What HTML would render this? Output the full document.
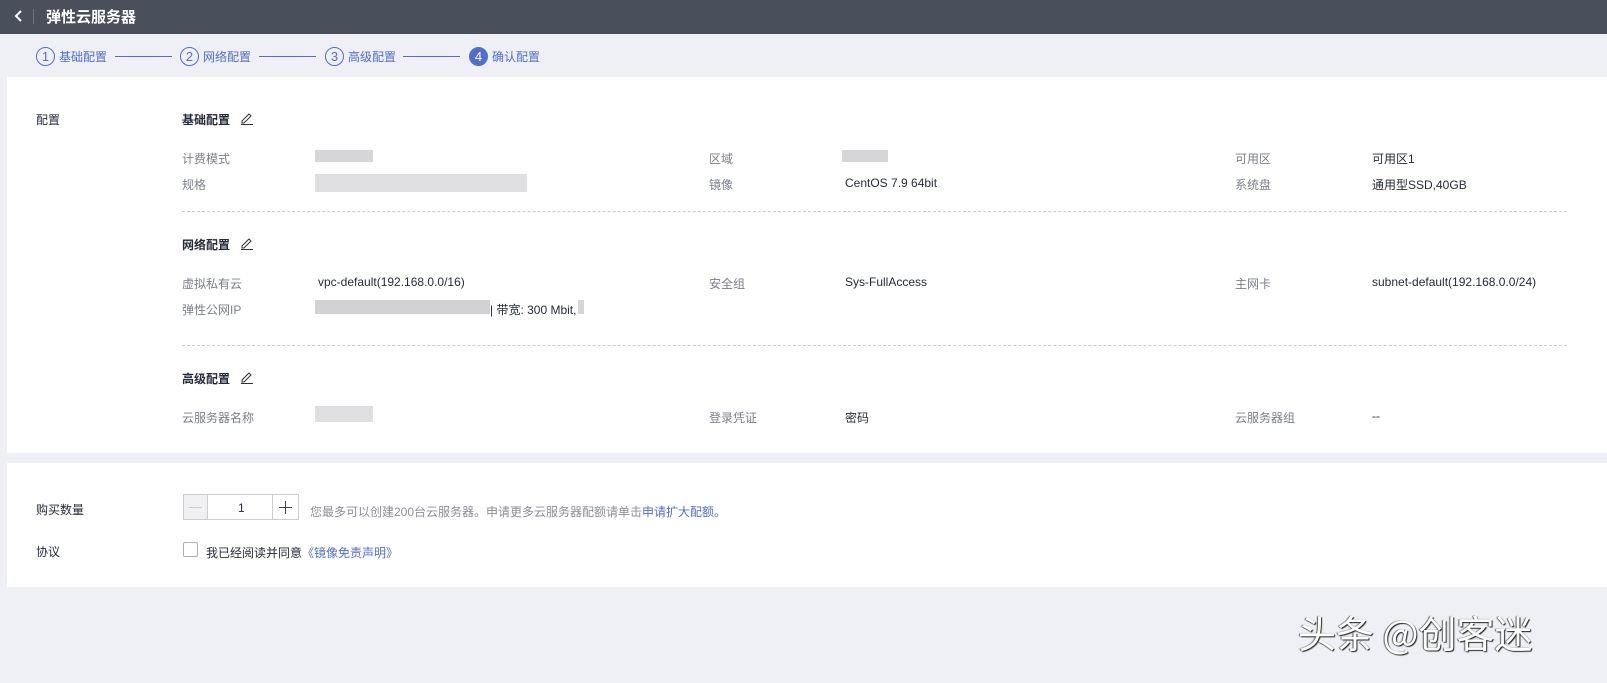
<!DOCTYPE html>
<html><head><meta charset="utf-8"><style>
*{margin:0;padding:0;box-sizing:border-box}
body{width:1607px;height:683px;background:#eef0f5;font-family:"Liberation Sans","Noto Sans CJK SC",sans-serif;font-size:12px;color:#252b3a;position:relative;overflow:hidden}
.a{position:absolute;white-space:nowrap}
.hd{position:absolute;left:0;top:0;width:1607px;height:34px;background:#4a4f5c}
.card{position:absolute;left:7px;right:0;background:#fff}
.lbl{color:#7b7f88}
.step{position:absolute;top:46px;height:20px;display:flex;align-items:center;color:#526ecc;font-size:12px}
.c{width:19px;height:19px;border:1px solid #526ecc;border-radius:50%;display:flex;align-items:center;justify-content:center;font-size:13px;margin-right:4px}
.line{position:absolute;top:56px;height:1px;background:#526ecc}
.blur{position:absolute;background:#d6d6d8}
.dash{position:absolute;left:182px;width:1385px;border-top:1px dashed #c9ccd2}
.pen{position:absolute;width:14px;height:14px}
</style></head><body>
<div class="hd"></div>
<svg class="a" style="left:14px;top:9px" width="10" height="14" viewBox="0 0 10 14"><path d="M7 2 L2 7 L7 12" fill="none" stroke="#fff" stroke-width="2"/></svg>
<div class="a" style="left:33px;top:9px;width:1px;height:15px;background:#6a6f7a"></div>
<div class="a" style="left:46px;top:6px;color:#fff;font-size:15px;font-weight:bold">弹性云服务器</div>

<div class="step" style="left:36px"><div class="c">1</div>基础配置</div>
<div class="line" style="left:115px;width:57px"></div>
<div class="step" style="left:180px"><div class="c">2</div>网络配置</div>
<div class="line" style="left:259px;width:57px"></div>
<div class="step" style="left:325px"><div class="c">3</div>高级配置</div>
<div class="line" style="left:403px;width:57px"></div>
<div class="step" style="left:469px"><div class="c" style="background:#526ecc;color:#fff">4</div>确认配置</div>

<div class="card" style="top:77px;height:376px"></div>
<div class="a" style="left:36px;top:111px">配置</div>

<div class="a" style="left:182px;top:111px;font-weight:bold">基础配置</div>
<svg class="pen" style="left:240px;top:111px" viewBox="0 0 14 14"><path d="M2 10 L9 3 L11 5 L4 12 L2 12 Z" fill="none" stroke="#333" stroke-width="1"/><path d="M1 13.5 H13" stroke="#333"/></svg>
<div class="a lbl" style="left:182px;top:150px">计费模式</div>
<div class="blur" style="left:315px;top:150px;width:58px;height:12px"></div>
<div class="a lbl" style="left:709px;top:150px">区域</div>
<div class="blur" style="left:842px;top:150px;width:46px;height:12px"></div>
<div class="a lbl" style="left:1235px;top:150px">可用区</div>
<div class="a" style="left:1372px;top:150px">可用区1</div>
<div class="a lbl" style="left:182px;top:176px">规格</div>
<div class="blur" style="left:315px;top:174px;width:212px;height:18px;background:#e0e0e2"></div>
<div class="a lbl" style="left:709px;top:176px">镜像</div>
<div class="a" style="left:845px;top:176px">CentOS 7.9 64bit</div>
<div class="a lbl" style="left:1235px;top:176px">系统盘</div>
<div class="a" style="left:1372px;top:176px">通用型SSD,40GB</div>
<div class="dash" style="top:211px"></div>

<div class="a" style="left:182px;top:236px;font-weight:bold">网络配置</div>
<svg class="pen" style="left:240px;top:236px" viewBox="0 0 14 14"><path d="M2 10 L9 3 L11 5 L4 12 L2 12 Z" fill="none" stroke="#333" stroke-width="1"/><path d="M1 13.5 H13" stroke="#333"/></svg>
<div class="a lbl" style="left:182px;top:275px">虚拟私有云</div>
<div class="a" style="left:318px;top:275px">vpc-default(192.168.0.0/16)</div>
<div class="a lbl" style="left:709px;top:275px">安全组</div>
<div class="a" style="left:845px;top:275px">Sys-FullAccess</div>
<div class="a lbl" style="left:1235px;top:275px">主网卡</div>
<div class="a" style="left:1372px;top:275px">subnet-default(192.168.0.0/24)</div>
<div class="a lbl" style="left:182px;top:301px">弹性公网IP</div>
<div class="blur" style="left:315px;top:300px;width:175px;height:14px;background:#d2d2d4"></div>
<div class="a" style="left:490px;top:301px">| 带宽: 300 Mbit,</div>
<div class="blur" style="left:578px;top:300px;width:6px;height:14px"></div>
<div class="dash" style="top:345px"></div>

<div class="a" style="left:182px;top:370px;font-weight:bold">高级配置</div>
<svg class="pen" style="left:240px;top:370px" viewBox="0 0 14 14"><path d="M2 10 L9 3 L11 5 L4 12 L2 12 Z" fill="none" stroke="#333" stroke-width="1"/><path d="M1 13.5 H13" stroke="#333"/></svg>
<div class="a lbl" style="left:182px;top:409px">云服务器名称</div>
<div class="blur" style="left:315px;top:406px;width:58px;height:16px;background:#e0e0e2"></div>
<div class="a lbl" style="left:709px;top:409px">登录凭证</div>
<div class="a" style="left:845px;top:409px">密码</div>
<div class="a lbl" style="left:1235px;top:409px">云服务器组</div>
<div class="a" style="left:1372px;top:409px">--</div>

<div class="card" style="top:463px;height:124px"></div>
<div class="a" style="left:36px;top:501px">购买数量</div>
<div class="a" style="left:183px;top:494px;width:116px;height:26px;border:1px solid #c9ccd2;background:#fff"></div>
<div class="a" style="left:184px;top:495px;width:23px;height:24px;background:#f0f0f2"></div>
<div class="a" style="left:189px;top:507px;width:13px;height:1px;background:#ccc"></div>
<div class="a" style="left:207px;top:494px;width:1px;height:26px;background:#c9ccd2"></div>
<div class="a" style="left:272px;top:494px;width:1px;height:26px;background:#c9ccd2"></div>
<div class="a" style="left:238px;top:501px">1</div>
<div class="a" style="left:279px;top:507px;width:13px;height:1px;background:#444"></div>
<div class="a" style="left:285px;top:501px;width:1px;height:13px;background:#444"></div>
<div class="a" style="left:310px;top:503px;color:#8a8e99">您最多可以创建200台云服务器。申请更多云服务器配额请单击<span style="color:#526ecc">申请扩大配额。</span></div>
<div class="a" style="left:36px;top:543px">协议</div>
<div class="a" style="left:183px;top:542px;width:15px;height:15px;border:1px solid #adb0b8;border-radius:2px"></div>
<div class="a" style="left:206px;top:544px">我已经阅读并同意<span style="color:#526ecc">《镜像免责声明》</span></div>

<div class="a" style="left:1298px;top:604px;font-size:38px;color:#fff;font-family:'Noto Sans CJK SC',sans-serif;text-shadow:1px 1px 1px #222,-1px 0 1px #555">头条 @创客迷</div>
</body></html>
